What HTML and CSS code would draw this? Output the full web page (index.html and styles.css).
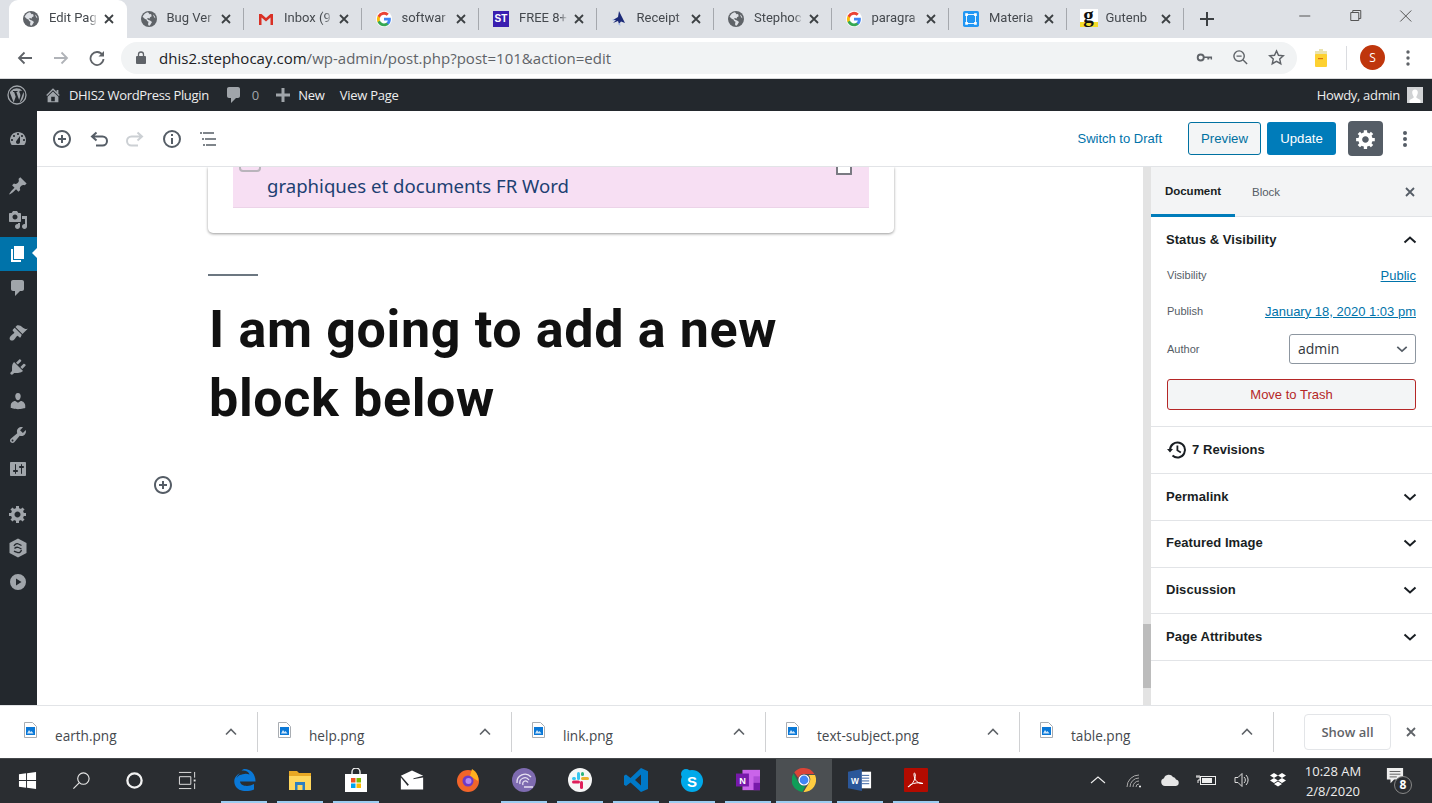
FILE: index.html
```html
<!DOCTYPE html>
<html lang="en">
<head>
<meta charset="utf-8">
<title>Edit Page</title>
<link rel="stylesheet" href="styles.css">
</head>
<body>
<svg class="defs" aria-hidden="true">
  <symbol id="globe" viewBox="0 0 16 16"><circle cx="8" cy="8" r="8" fill="#5f6368"/><path fill="#dee1e6" d="M7 1.200C4.500 1.600 2.500 3.400 1.600 5.700L4 8l1.500.5.600 1.600 1.400.6-.5 2.500 1 1.800 1.400-1.200 1.600-2.800-2-1.500-2-.7-1-1.300 1.200-.5 1.200.8.700-1.600 1.600-1-.6-2.200-1.500.3zM12 3.500l1 2.500 1.300 1.400c0-1.500-.8-3-2.300-3.900z"/></symbol>
  <symbol id="glogo" viewBox="-1 -1 20 20"><circle cx="9" cy="9" r="10" fill="#fff"/><path fill="#4285f4" d="M17.600 9.200c0-.6-.1-1.300-.2-1.800H9v3.500h4.800a4.100 4.100 0 0 1-1.800 2.700v2.200h2.900c1.700-1.600 2.700-3.900 2.700-6.600z"/><path fill="#34a853" d="M9 18c2.400 0 4.500-.8 5.900-2.200L12 13.600c-.8.500-1.800.9-3 .9-2.300 0-4.300-1.600-5-3.700H1v2.300A9 9 0 0 0 9 18z"/><path fill="#fbbc05" d="M4 10.700a5.400 5.400 0 0 1 0-3.400V5H1a9 9 0 0 0 0 8z"/><path fill="#ea4335" d="M9 3.600c1.300 0 2.500.5 3.400 1.300L15 2.400A9 9 0 0 0 1 5l3 2.300c.7-2.100 2.700-3.700 5-3.700z"/></symbol>
  <symbol id="close" viewBox="0 0 10 10"><path d="M1 1l8 8M9 1l-8 8" fill="none" stroke="currentColor" stroke-width="1.800"/></symbol>
  <symbol id="chev" viewBox="0 0 14 8"><path d="M1.500 1.500 7 6.500l5.500-5" fill="none" stroke="currentColor" stroke-width="2"/></symbol>
  <symbol id="chevup" viewBox="0 0 12 8"><path d="M1 6.500 6 1.500l5 5" fill="none" stroke="currentColor" stroke-width="1.600"/></symbol>
  <symbol id="file" viewBox="0 0 13 16"><path d="M.5.500h8l4 4v11H.500z" fill="#fff" stroke="#a9adb2"/><rect x="2" y="5" width="9" height="8" fill="#0a78d7"/><path d="M3 11.500l2-3.500 1.500 2 1-1 2 2.500z" fill="#cfe6fa"/></symbol>
  <symbol id="i-dash" viewBox="0 0 20 20"><path d="M3.760 16h12.480c1.100-1.370 1.760-3.110 1.760-5 0-4.420-3.580-8-8-8s-8 3.580-8 8c0 1.890.660 3.630 1.760 5zM10 4c.550 0 1 .450 1 1s-.450 1-1 1-1-.450-1-1 .450-1 1-1zM6 6c.550 0 1 .450 1 1s-.450 1-1 1-1-.450-1-1 .450-1 1-1zm8 0c.550 0 1 .450 1 1s-.450 1-1 1-1-.450-1-1 .450-1 1-1zm-5.370 5.550L12 7v6c0 1.100-.900 2-2 2s-2-.900-2-2c0-.570.240-1.080.630-1.450zM4 10c.550 0 1 .450 1 1s-.450 1-1 1-1-.450-1-1 .450-1 1-1zm12 0c.550 0 1 .450 1 1s-.450 1-1 1-1-.450-1-1 .450-1 1-1z"/></symbol>
  <symbol id="i-pin" viewBox="0 0 20 20"><path d="M10.440 3.020l1.820-1.820 6.360 6.350-1.830 1.820c-1.050-.680-2.480-.570-3.410.360l-.750.750c-.920.930-1.040 2.350-.350 3.410l-1.830 1.820-2.410-2.410-2.800 2.790c-.420.420-3.380 2.710-3.800 2.290s1.860-3.390 2.280-3.810l2.790-2.790L4.100 9.360l1.830-1.820c1.050.690 2.480.570 3.400-.360l.750-.750c.930-.920 1.050-2.350.360-3.410z"/></symbol>
  <symbol id="i-media" viewBox="0 0 20 20"><path d="M13 11V4c0-.550-.450-1-1-1h-1.670L9 1H5L3.670 3H2c-.550 0-1 .450-1 1v7c0 .550.450 1 1 1h10c.550 0 1-.450 1-1zM7 4.500c1.380 0 2.500 1.120 2.500 2.500S8.380 9.500 7 9.500 4.500 8.380 4.500 7 5.620 4.500 7 4.500zM14 6h5v10.500c0 1.380-1.120 2.500-2.500 2.500S14 17.880 14 16.500s1.120-2.500 2.500-2.500c.170 0 .340.020.500.050V9h-3V6zm-4 8.050V13h2v3.500c0 1.380-1.120 2.500-2.500 2.500S7 17.880 7 16.500 8.120 14 9.500 14c.170 0 .340.020.500.050z"/></symbol>
  <symbol id="i-page" viewBox="0 0 20 20"><path d="M6 15V2h10v13H6zm-1 1h8v2H3V5h2v11z"/></symbol>
  <symbol id="i-comment" viewBox="0 0 20 20"><path d="M5 2h9c1.100 0 2 .900 2 2v7c0 1.100-.900 2-2 2h-2l-5 5v-5H5c-1.100 0-2-.900-2-2V4c0-1.100.900-2 2-2z"/></symbol>
  <symbol id="i-brush" viewBox="0 0 20 20"><path d="M14.480 11.060L7.410 3.990l1.500-1.500c.500-.560 2.300-.470 3.510.320 1.210.800 1.430 1.280 2.910 2.100 1.180.640 2.450 1.260 4.450.850zM13.770 11.770 6.700 4.700 4.930 6.470a1 1 0 0 0 0 1.410l1.060 1.060a1 1 0 0 1 0 1.420c-.600.600-1.430 1.110-2.210 1.690-.350.260-.700.530-1.010.840-1.400 1.400-1.500 3-.500 4s2.600.900 4-.500c.310-.310.580-.660.840-1.010.580-.780 1.090-1.610 1.690-2.210a1 1 0 0 1 1.420 0l1.060 1.060a1 1 0 0 0 1.410 0z"/></symbol>
  <symbol id="i-plug" viewBox="0 0 20 20"><path d="M13.110 4.360L9.870 7.600 8 5.730l3.240-3.240c.350-.340 1.050-.200 1.560.320.520.510.660 1.210.310 1.550zm-8 1.770l.910-1.120 9.010 9.010-1.190.840c-.710.710-2.630 1.160-3.820 1.160H6.140L4.900 17.260c-.590.590-1.540.590-2.120 0-.590-.580-.590-1.530 0-2.120l1.240-1.240v-3.880c0-1.130.400-3.190 1.090-3.890zm7.260 3.970l3.240-3.240c.340-.350 1.040-.210 1.550.310.520.510.660 1.210.310 1.550l-3.240 3.250z"/></symbol>
  <symbol id="i-user" viewBox="0 0 20 20"><path d="M10 9.250c-2.270 0-2.730-3.440-2.730-3.440C7 4.020 7.820 2 9.970 2c2.160 0 2.980 2.020 2.710 3.810 0 0-.410 3.440-2.680 3.440zm0 2.570L12.720 10c2.390 0 4.520 2.330 4.520 4.530v2.490s-3.650 1.130-7.240 1.130c-3.650 0-7.240-1.130-7.240-1.130v-2.490c0-2.250 1.940-4.480 4.470-4.480z"/></symbol>
  <symbol id="i-tools" viewBox="0 0 20 20"><path d="M16.680 9.770c-1.340 1.340-3.300 1.670-4.950.990l-5.410 6.520c-.990.990-2.590.990-3.580 0s-.990-2.590 0-3.570l6.520-5.420c-.680-1.650-.350-3.610.990-4.950 1.280-1.280 3.120-1.620 4.720-1.060l-2.890 2.890 2.820 2.820 2.860-2.870c.530 1.580.180 3.390-1.080 4.650zM3.810 16.210c.400.390 1.040.390 1.430 0 .400-.400.400-1.040 0-1.430-.390-.400-1.030-.400-1.430 0-.390.390-.390 1.030 0 1.430z"/></symbol>
  <symbol id="i-sliders" viewBox="0 0 20 20"><path d="M18 16V4c0-.550-.450-1-1-1H3c-.550 0-1 .450-1 1v12c0 .550.450 1 1 1h14c.550 0 1-.450 1-1zM8 11h1c.550 0 1 .450 1 1s-.450 1-1 1H8v1.500c0 .280-.220.500-.500.500s-.500-.220-.500-.500V13H6c-.550 0-1-.450-1-1s.450-1 1-1h1V5.500c0-.280.220-.500.500-.500s.500.220.500.500V11zm5-2h-1c-.550 0-1-.450-1-1s.450-1 1-1h1V5.500c0-.280.220-.500.500-.500s.500.220.500.500V7h1c.550 0 1 .450 1 1s-.450 1-1 1h-1v5.500c0 .280-.220.500-.500.500s-.500-.220-.500-.500V9z"/></symbol>
  <symbol id="i-gear" viewBox="0 0 20 20"><path d="M18 12h-2.180c-.170.700-.440 1.350-.810 1.930l1.540 1.540-2.100 2.100-1.540-1.540c-.580.360-1.230.630-1.910.790V19H8v-2.180c-.680-.160-1.330-.430-1.910-.790l-1.540 1.540-2.120-2.120 1.540-1.540c-.360-.580-.630-1.230-.790-1.910H1V9.030h2.170c.160-.700.440-1.350.800-1.940L2.430 5.550l2.100-2.100 1.540 1.540c.580-.370 1.240-.640 1.930-.810V2h3v2.180c.680.160 1.330.430 1.910.790l1.540-1.540 2.120 2.120-1.540 1.540c.360.590.640 1.240.800 1.940H18V12zm-8.500 1.500c1.660 0 3-1.340 3-3s-1.340-3-3-3-3 1.340-3 3 1.340 3 3 3z"/></symbol>
  <symbol id="i-plus" viewBox="0 0 20 20"><path d="M10 1c-5 0-9 4-9 9s4 9 9 9 9-4 9-9-4-9-9-9zm0 16c-3.900 0-7-3.100-7-7s3.100-7 7-7 7 3.100 7 7-3.100 7-7 7zm1-11H9v3H6v2h3v3h2v-3h3V9h-3V6z"/></symbol>
</svg>

<header class="tabstrip">
  <div class="tab tab-active"><svg class="tab-ic"><use href="#globe"/></svg><span class="tab-t">Edit Pag</span><svg class="tab-x"><use href="#close"/></svg></div>
  <div class="tab"><svg class="tab-ic"><use href="#globe"/></svg><span class="tab-t">Bug Ver</span><svg class="tab-x"><use href="#close"/></svg></div>
  <div class="tab"><svg class="tab-ic" viewBox="0 0 16 16"><path d="M1 3h2.500L8 7l4.500-4H15v11h-2.500V6.500L8 10.500 3.500 6.500V14H1z" fill="#d93025"/></svg><span class="tab-t">Inbox (9</span><svg class="tab-x"><use href="#close"/></svg></div>
  <div class="tab"><svg class="tab-ic"><use href="#glogo"/></svg><span class="tab-t">softwar</span><svg class="tab-x"><use href="#close"/></svg></div>
  <div class="tab"><span class="tab-ic st">ST</span><span class="tab-t">FREE 8+</span><svg class="tab-x"><use href="#close"/></svg></div>
  <div class="tab"><svg class="tab-ic" viewBox="0 0 16 16"><path d="M8 0l3 6 3 6-4-1.500L8 13l-1-3-5 2 3-3H2l5-3z" fill="#1c2a78"/><path d="M1 9l2-1 .5 2zM7 13l2-1 .5 3z" fill="#9fb4e6"/></svg><span class="tab-t">Receipt</span><svg class="tab-x"><use href="#close"/></svg></div>
  <div class="tab"><svg class="tab-ic"><use href="#globe"/></svg><span class="tab-t">Stephoc</span><svg class="tab-x"><use href="#close"/></svg></div>
  <div class="tab"><svg class="tab-ic"><use href="#glogo"/></svg><span class="tab-t">paragra</span><svg class="tab-x"><use href="#close"/></svg></div>
  <div class="tab"><svg class="tab-ic" viewBox="0 0 18 18"><rect width="18" height="18" rx="2" fill="#2196f3"/><rect x="4" y="4" width="10" height="10" fill="none" stroke="#fff"/><path fill="#fff" d="M2.500 2.500h3v3h-3zM12.500 2.500h3v3h-3zM2.500 12.500h3v3h-3zM12.500 12.500h3v3h-3z"/></svg><span class="tab-t">Materia</span><svg class="tab-x"><use href="#close"/></svg></div>
  <div class="tab"><span class="tab-ic gut">g</span><span class="tab-t">Gutenb</span><svg class="tab-x"><use href="#close"/></svg></div>
  <svg class="newtab" viewBox="0 0 14 14"><path d="M7 0v14M0 7h14" stroke="#3c4043" stroke-width="2" fill="none"/></svg>
  <div class="winctl">
    <svg class="win-b" viewBox="0 0 50 12"><path d="M20 6h11" stroke="#555" fill="none"/></svg>
    <svg class="win-b" viewBox="0 0 50 12"><path d="M21.500 2.500h8v8h-8zM23.500 2.500V.5h8v8h-2" stroke="#555" fill="none"/></svg>
    <svg class="win-b" viewBox="0 0 50 12"><path d="M20 .5l11 11M31 .5l-11 11" stroke="#555" fill="none"/></svg>
  </div>
</header>

<nav class="navbar">
  <svg class="nav-b" viewBox="0 0 16 16"><path d="M15 8H2M7.500 2.500 2 8l5.500 5.500" fill="none" stroke="#5f6368" stroke-width="1.800"/></svg>
  <svg class="nav-b" viewBox="0 0 16 16"><path d="M1 8h13M8.500 2.500 14 8l-5.500 5.500" fill="none" stroke="#b0b3b8" stroke-width="1.800"/></svg>
  <svg class="nav-b" viewBox="0 0 16 16"><path d="M13.500 5A6.500 6.500 0 1 0 14.500 9" fill="none" stroke="#5f6368" stroke-width="1.800"/><path d="M15 1v5.500H9.500z" fill="#5f6368"/></svg>
  <div class="pill">
    <svg class="lock" viewBox="0 0 10 13"><path d="M2.500 5V3.500a2.500 2.500 0 0 1 5 0V5" fill="none" stroke="#5f6368" stroke-width="1.300"/><rect y="5" width="10" height="8" rx="1" fill="#5f6368"/></svg>
    <span class="url"><b class="url-h">dhis2.stephocay.com</b>/wp-admin/post.php?post=101&amp;action=edit</span>
    <svg class="pill-ic" viewBox="0 0 18 18"><circle cx="5" cy="9" r="3.200" fill="none" stroke="#5f6368" stroke-width="2"/><path d="M8 8h9v3h-1.500v-1.300H14V11h-2V9.500H8z" fill="#5f6368"/></svg>
    <svg class="pill-ic" viewBox="0 0 18 18"><circle cx="7.500" cy="7.500" r="5.500" fill="none" stroke="#5f6368" stroke-width="1.500"/><path d="M4.800 7.500h5.400M11.500 11.500 16 16" stroke="#5f6368" stroke-width="1.500" fill="none"/></svg>
    <svg class="pill-ic" viewBox="0 0 18 18"><path d="M9 2l2.100 4.700 5.100.5-3.800 3.400 1.100 5L9 13l-4.500 2.600 1.100-5-3.800-3.400 5.100-.5z" fill="none" stroke="#5f6368" stroke-width="1.500"/></svg>
  </div>
  <svg class="ext" viewBox="0 0 12 18"><path d="M4 0h4v2h4v4H0V2h4z" fill="#e9e3b0"/><rect y="5" width="12" height="13" rx="1" fill="#fdd131"/><rect x="3" y="9" width="5" height="1.200" fill="#d9730d"/></svg>
  <span class="navsep"></span>
  <span class="avatar">S</span>
  <svg class="kebab" viewBox="0 0 4 16"><circle cx="2" cy="2" r="1.700"/><circle cx="2" cy="8" r="1.700"/><circle cx="2" cy="14" r="1.700"/></svg>
</nav>

<div class="adminbar">
  <svg class="ab-wp" viewBox="0 0 20 20"><circle cx="10" cy="10" r="9" fill="none" stroke="#a0a5aa" stroke-width="1.300"/><path d="M2.800 7.600 6.700 17.500l2-5.700L7.100 7H6V6h4.500v1H9.300l2.800 8 1-3c.5-1.700.2-3.200-.6-4.500-.4-.8.100-1.800 1-1.700h1.800A7.800 7.800 0 0 0 3.800 6zM16.500 7c.8 2.500.4 5-1.400 8.200L12.600 17.800 15 11z" fill="#a0a5aa"/></svg>
  <svg class="ab-home" viewBox="0 0 20 20"><path fill="#a0a5aa" d="M16 8.500l1.530 1.530-1.060 1.060L10 4.620l-6.470 6.470-1.060-1.060L10 2.500l4 4v-2h2v4zm-6-2.460l6 5.990V18H4v-5.970zM12 17v-5H8v5h4z"/></svg>
  <span class="ab-t ab-site">DHIS2 WordPress Plugin</span>
  <svg class="ab-cmt"><use href="#i-comment"/></svg>
  <span class="ab-t ab-count">0</span>
  <svg class="ab-plus" viewBox="0 0 14 14"><path d="M5.500 0h3v5.500H14v3H8.500V14h-3V8.500H0v-3h5.500z" fill="#a0a5aa"/></svg>
  <span class="ab-t ab-new">New</span>
  <span class="ab-t ab-view">View Page</span>
  <span class="ab-t ab-howdy">Howdy, admin</span>
  <svg class="ab-ava" viewBox="0 0 16 16"><rect width="16" height="16" fill="#d0d2d4"/><path d="M8 2.500c2 0 3 1.500 2.800 3.300-.1 1.300-.8 3-1.400 3.700v1.300l4 2.200V16H2.600v-3l4-2.200V9.500c-.6-.7-1.300-2.400-1.400-3.700C5 4 6 2.500 8 2.500z" fill="#fff"/></svg>
</div>

<div class="wp">
  <aside class="menu">
    <div class="mi mi-first"><svg><use href="#i-dash"/></svg></div>
    <div class="mi mi-gap1"><svg><use href="#i-pin"/></svg></div>
    <div class="mi"><svg><use href="#i-media"/></svg></div>
    <div class="mi mi-on"><svg><use href="#i-page"/></svg></div>
    <div class="mi"><svg><use href="#i-comment"/></svg></div>
    <div class="mi mi-gap"><svg><use href="#i-brush"/></svg></div>
    <div class="mi"><svg><use href="#i-plug"/></svg></div>
    <div class="mi"><svg><use href="#i-user"/></svg></div>
    <div class="mi"><svg><use href="#i-tools"/></svg></div>
    <div class="mi"><svg><use href="#i-sliders"/></svg></div>
    <div class="mi mi-gap"><svg><use href="#i-gear"/></svg></div>
    <div class="mi"><svg viewBox="0 0 20 20"><path d="M10 .5 18.500 5v10L10 19.500 1.500 15V5z"/><path d="M6 8c1-2 3-3 4.500-2l3 1.500M6.500 10.500c1-1 2.500-1.500 4-1l3 1.500M6 13c1 .8 2 1 3.500 1.500 2 .5 3.500-1 4-2.500" fill="none" stroke="#23282d" stroke-width="1.300"/></svg></div>
    <div class="mi"><svg viewBox="0 0 20 20"><path d="M10 2a8 8 0 1 0 0 16 8 8 0 0 0 0-16zM8 6.500l5.500 3.500L8 13.500z" fill-rule="evenodd"/></svg></div>
  </aside>

  <div class="editor">
    <div class="edit-top">
      <svg class="et-ic et-plus"><use href="#i-plus"/></svg>
      <svg class="et-ic" viewBox="0 0 20 20"><path d="M7.500 3.500 3 7.500l4.500 4M4 7.500h9.500a4.500 4.500 0 0 1 0 9H7" fill="none" stroke="#555d66" stroke-width="2"/></svg>
      <svg class="et-ic" viewBox="0 0 20 20"><path d="M12.500 3.500 17 7.500l-4.500 4M16 7.500H6.500a4.500 4.500 0 0 0 0 9H13" fill="none" stroke="#ccd0d4" stroke-width="2"/></svg>
      <svg class="et-ic" viewBox="0 0 20 20"><circle cx="10" cy="10" r="8" fill="none" stroke="#555d66" stroke-width="2"/><path d="M9 9h2v6H9zM9 5h2v2H9z" fill="#555d66"/></svg>
      <svg class="et-ic" viewBox="0 0 20 20"><path d="M2 4h2M5 4h11M4 10h2M7 10h11M5 16h2M8 16h10" fill="none" stroke="#555d66" stroke-width="1.600"/></svg>
      <a class="draft">Switch to Draft</a>
      <span class="btn btn-prev">Preview</span>
      <span class="btn btn-upd">Update</span>
      <span class="btn-gear"><svg viewBox="0 0 20 20"><use href="#i-gear"/></svg></span>
      <svg class="et-dots" viewBox="0 0 4 16"><circle cx="2" cy="2" r="2"/><circle cx="2" cy="8" r="2"/><circle cx="2" cy="14" r="2"/></svg>
    </div>
    <div class="edit-body">
      <main class="canvas">
        <section class="card">
          <div class="card-pink">
            <div class="pink-icons">
              <svg class="pk-link" viewBox="0 0 22 12"><rect x="1" y="1" width="20" height="10" rx="3" fill="none" stroke="#b9b4bb" stroke-width="2"/><path d="M7 6h8" stroke="#b9b4bb" stroke-width="2"/></svg>
              <span class="pk-check"></span>
            </div>
            <p class="pink-t">graphiques et documents FR Word</p>
          </div>
        </section>
        <hr class="sep">
        <h1 class="head">I am going to add a new block below</h1>
        <svg class="inserter"><use href="#i-plus"/></svg>
      </main>
      <div class="scrollbar"><span class="thumb"></span></div>
      <aside class="side">
        <div class="side-tabs">
          <span class="st-a">Document</span>
          <span class="st-b">Block</span>
          <svg class="st-x"><use href="#close"/></svg>
        </div>
        <section class="panel panel-open">
          <div class="p-head"><h2>Status &amp; Visibility</h2><svg class="p-chev p-up"><use href="#chev"/></svg></div>
          <div class="row row-v"><span class="lab">Visibility</span><a class="lnk">Public</a></div>
          <div class="row row-p"><span class="lab">Publish</span><a class="lnk">January 18, 2020 1:03 pm</a></div>
          <div class="row row-a"><span class="lab">Author</span><span class="sel">admin<svg><use href="#chev"/></svg></span></div>
          <div class="trash">Move to Trash</div>
        </section>
        <section class="panel p-rev">
          <svg viewBox="0 0 20 20"><path d="M3 10a7.500 7.500 0 1 1 2.500 5.600" fill="none" stroke="#191e23" stroke-width="2"/><path d="M0 9h6l-3 3.500zM9.500 5.500h1.800v4.500l3 1.800-.9 1.400-3.900-2.400z" fill="#191e23"/></svg>
          <h2>7 Revisions</h2>
        </section>
        <section class="panel"><div class="p-head"><h2>Permalink</h2><svg class="p-chev"><use href="#chev"/></svg></div></section>
        <section class="panel p-raise"><div class="p-head"><h2>Featured Image</h2><svg class="p-chev"><use href="#chev"/></svg></div></section>
        <section class="panel p-short"><div class="p-head"><h2>Discussion</h2><svg class="p-chev"><use href="#chev"/></svg></div></section>
        <section class="panel"><div class="p-head"><h2>Page Attributes</h2><svg class="p-chev"><use href="#chev"/></svg></div></section>
      </aside>
    </div>
  </div>
</div>

<div class="downloads">
  <div class="dl"><svg class="dl-f"><use href="#file"/></svg><span class="dl-n">earth.png</span><svg class="dl-c"><use href="#chevup"/></svg></div>
  <div class="dl"><svg class="dl-f"><use href="#file"/></svg><span class="dl-n">help.png</span><svg class="dl-c"><use href="#chevup"/></svg></div>
  <div class="dl"><svg class="dl-f"><use href="#file"/></svg><span class="dl-n">link.png</span><svg class="dl-c"><use href="#chevup"/></svg></div>
  <div class="dl"><svg class="dl-f"><use href="#file"/></svg><span class="dl-n">text-subject.png</span><svg class="dl-c"><use href="#chevup"/></svg></div>
  <div class="dl"><svg class="dl-f"><use href="#file"/></svg><span class="dl-n">table.png</span><svg class="dl-c"><use href="#chevup"/></svg></div>
  <span class="showall">Show all</span>
  <svg class="dl-x"><use href="#close"/></svg>
</div>

<footer class="taskbar">
  <div class="tb-app"><svg viewBox="0 0 20 20"><path fill="#fff" d="M1 3.500 8.500 2.400V9.500H1zM9.500 2.300 19 1v8.500H9.500zM1 10.500h7.500v7.100L1 16.500zM9.500 10.500H19V19l-9.500-1.300z"/></svg></div>
  <div class="tb-app"><svg viewBox="0 0 20 20"><circle cx="12" cy="8" r="6" fill="none" stroke="#e6e6e6" stroke-width="1.200"/><path d="M7.500 12.500 1.500 18.500" stroke="#e6e6e6" stroke-width="1.200"/></svg></div>
  <div class="tb-app"><svg viewBox="0 0 20 20"><circle cx="10" cy="10" r="7.500" fill="none" stroke="#f2f2f2" stroke-width="2.400"/></svg></div>
  <div class="tb-app"><svg viewBox="0 0 20 20"><path d="M1 1.500h13M1 18.500h13M1.500 6h12v8h-12zM17.500 1v6M17.500 13v6" fill="none" stroke="#e6e6e6"/><rect x="16.500" y="9" width="2" height="2" fill="#e6e6e6"/></svg></div>
  <div class="tb-app tb-run"><svg viewBox="0 0 24 24"><path fill="#0a78d7" d="M12.500 1C19 1 23.500 6 23.500 13.500H8c.3 4.500 8 6 14 2.500v5.500c-7 3-16.500 2-19-4.500C.8 11.500 4 7 8 5.200 6 7 5 8.500 4.500 10c3-5 9-4 10-1.500h-6c1-3 6-3.500 9-2-1-3-4-4.500-8-4C11 1.500 11.500 1 12.500 1z"/></svg></div>
  <div class="tb-app tb-run"><svg viewBox="0 0 24 24"><path fill="#e8a824" d="M1 3h8l2 2h12v17H1z"/><path fill="#ffd75e" d="M1 8h22v14H1z"/><path fill="#2d7fc1" d="M7 14h10v8h-2.500v-5h-5v5H7z"/></svg></div>
  <div class="tb-app tb-run"><svg viewBox="0 0 24 24"><path d="M8 7V4a4 4 0 0 1 8 0v3" fill="none" stroke="#eee" stroke-width="1.400"/><rect x="1" y="6" width="22" height="18" fill="#fff"/><rect x="7" y="10" width="4.500" height="4.500" fill="#f25022"/><rect x="12.500" y="10" width="4.500" height="4.500" fill="#7fba00"/><rect x="7" y="15.500" width="4.500" height="4.500" fill="#00a4ef"/><rect x="12.500" y="15.500" width="4.500" height="4.500" fill="#ffb900"/></svg></div>
  <div class="tb-app"><svg viewBox="0 0 28 24"><path fill="#fff" d="M14 1 27 7 16 10 11 18 3 9 1 7zM1 9l8 10 6-8 12-2v14H1z"/></svg></div>
  <div class="tb-app"><svg viewBox="0 0 24 24"><circle cx="12" cy="13" r="11" fill="#f2652a"/><path d="M16 1c5 3 7 8 6 12L14 8z" fill="#ffb01f"/><circle cx="12" cy="13" r="5.500" fill="#6e3bc7"/><circle cx="12.500" cy="13" r="3" fill="#b48af0"/></svg></div>
  <div class="tb-app tb-run"><svg viewBox="0 0 24 24"><circle cx="12" cy="12" r="12" fill="#7e6bb0"/><path d="M5 15a8 8 0 0 1 14-6M8 16a5 5 0 0 1 9-4M11 17a2.500 2.500 0 0 1 5-2.500M12 19h9" fill="none" stroke="#e7e1f2" stroke-width="1.300"/></svg></div>
  <div class="tb-app tb-run"><svg viewBox="0 0 24 24"><circle cx="12" cy="12" r="12" fill="#f6f6f6"/><rect x="9" y="4" width="3" height="8" rx="1.500" fill="#36c5f0"/><rect x="12" y="13" width="3" height="8" rx="1.500" fill="#e01e5a"/><rect x="4" y="12.500" width="8" height="3" rx="1.500" fill="#e01e5a"/><rect x="13" y="9" width="8" height="3" rx="1.500" fill="#ecb22e"/><rect x="13" y="4" width="3" height="4" rx="1.500" fill="#2eb67d"/><rect x="4" y="9" width="4" height="3" rx="1.500" fill="#36c5f0"/></svg></div>
  <div class="tb-app tb-run"><svg viewBox="0 0 24 24"><path fill="#0079c8" d="M17 0 24 3.200V21l-7 3L6.500 14.500 2 18 0 16.800v-9L2 6.500l4.500 3.500zM17 6.500 11 12l6 5.500z"/></svg></div>
  <div class="tb-app tb-run"><svg viewBox="0 0 24 24"><circle cx="12" cy="13" r="11" fill="#00a9ea"/><circle cx="6" cy="6" r="5" fill="#00a9ea"/><text x="12" y="19" class="sky">S</text></svg></div>
  <div class="tb-app tb-run"><svg viewBox="0 0 26 24"><rect x="7" y="1" width="19" height="22" fill="#ca64ea"/><rect x="19" y="8" width="7" height="7" fill="#ae4bd5"/><rect x="19" y="15" width="7" height="8" fill="#7719aa"/><rect y="5" width="14" height="14" fill="#7719aa"/><text x="7" y="16" class="one">N</text></svg></div>
  <div class="tb-app tb-run tb-chrome"><svg viewBox="0 0 24 24"><path fill="#db4437" d="M12 0a12 12 0 0 1 10.400 6H12a6 6 0 0 0-5.700 4L2.300 4.200A12 12 0 0 1 12 0z"/><path fill="#0f9d58" d="M1.600 5.500 6.800 15a6 6 0 0 0 6.700 2.800L10.400 24A12 12 0 0 1 1.600 5.500z"/><path fill="#ffcd40" d="M23 7A12 12 0 0 1 11.500 24l5.500-9a6 6 0 0 0-.5-8z"/><circle cx="12" cy="12" r="5" fill="#4285f4" stroke="#fff" stroke-width="1.200"/></svg></div>
  <div class="tb-app tb-run"><svg viewBox="0 0 26 24"><rect x="8" y="3" width="17" height="18" fill="#fff"/><path d="M15 7h8M15 10h8M15 13h8M15 16h8" stroke="#2b579a"/><path fill="#2b579a" d="M0 3 15 0v24L0 21z"/><text x="7.500" y="16" class="wrd">W</text></svg></div>
  <div class="tb-app tb-run"><svg viewBox="0 0 24 24"><rect width="24" height="24" rx="1" fill="#b30b00"/><path d="M4 19c3-1 6-5 7-9 .500-2 .500-5-.500-5-1 0-.500 4 1 7 1.500 2.500 5 4 7.500 3.500-2-1-6-1-9.500 0S4.500 18 4 19z" fill="none" stroke="#fff"/></svg></div>
  <div class="tray">
    <svg class="tr-ic" viewBox="0 0 16 16"><path d="M1 11 8 5l7 6" fill="none" stroke="#eee" stroke-width="1.100"/></svg>
    <svg class="tr-ic" viewBox="0 0 16 16"><path d="M1 15a12 12 0 0 1 12-12M4 15a9 9 0 0 1 9-9M7 15a6 6 0 0 1 6-6M10 15a3 3 0 0 1 3-3" fill="none" stroke="#aaa"/><circle cx="14" cy="14.500" r="1" fill="#fff"/></svg>
    <svg class="tr-ic tr-w" viewBox="0 0 20 16"><path fill="#e6e6e6" d="M5 14a4 4 0 0 1-1-7.800A5 5 0 0 1 13 5a4 4 0 0 1 3 2.500A3.300 3.300 0 0 1 16 14z"/></svg>
    <svg class="tr-ic tr-w" viewBox="0 0 20 16"><rect x="4.500" y="4.500" width="15" height="8" fill="none" stroke="#eee"/><rect x="6" y="6" width="10" height="5" fill="#eee"/><path d="M0 5h4v3H2v3M1 3v2M3 3v2" fill="none" stroke="#eee"/></svg>
    <svg class="tr-ic" viewBox="0 0 16 16"><path d="M1 5.500h3l4-4v13l-4-4H1zM10 5a4 4 0 0 1 0 6M12 3a7 7 0 0 1 0 10" fill="none" stroke="#ddd"/></svg>
    <svg class="tr-ic" viewBox="0 0 16 16"><path fill="#fff" d="M4 1l4 2.500L4 6 0 3.500zM12 1l4 2.500L12 6 8 3.500zM4 6l4 2.500L4 11 0 8.500zM12 6l4 2.500L12 11 8 8.500zM4 12l4-2.500 4 2.500-4 2.500z"/></svg>
    <div class="clock"><span>10:28 AM</span><span>2/8/2020</span></div>
    <div class="notif">
      <svg viewBox="0 0 20 20"><path d="M1 1h18v13H9l-4 4v-4H1z" fill="#eee"/><path d="M4 5h12M4 8h12M4 11h8" stroke="#555"/></svg>
      <span class="notif-n">8</span>
    </div>
  </div>
</footer>
</body>
</html>
```

FILE: styles.css
```css
* { box-sizing: border-box; }
html, body { margin: 0; padding: 0; }
body {
  width: 1432px;
  height: 803px;
  overflow: hidden;
  display: flex;
  flex-direction: column;
  font-family: "Liberation Sans", Arial, sans-serif;
  background: #fff;
}
.defs { display: none; }
h1, h2, p { margin: 0; }

/* Browser tab strip */
.tabstrip {
  height: 38px;
  flex: none;
  display: flex;
  align-items: center;
  background: #dee1e6;
  padding-left: 9px;
}
.tab {
  width: 117.500px;
  height: 38px;
  flex: none;
  display: flex;
  align-items: center;
  padding: 0 13px 0 14px;
  position: relative;
}
.tab::after {
  content: "";
  position: absolute;
  right: 0;
  top: 8px;
  width: 1px;
  height: 22px;
  background: #a5a8ad;
}
.tab-active { background: #fff; border-radius: 9px 9px 0 0; }
.tab-active::after { content: none; }
.tab-ic { width: 16px; height: 16px; flex: none; }
.tab-t {
  flex: 1;
  min-width: 0;
  margin: -2px 6px 0 10px;
  font: 13px/16px Roboto, sans-serif;
  color: #45494e;
  white-space: nowrap;
  overflow: hidden;
  -webkit-mask-image: linear-gradient(90deg, #000 82%, transparent);
  mask-image: linear-gradient(90deg, #000 82%, transparent);
}
.tab-x { width: 10px; height: 10px; flex: none; color: #3c4043; margin-top: -1px; }
.st { background: #3a1fb0; color: #fff; font: bold 10px/16px "Liberation Sans", sans-serif; text-align: center; }
.gut {
  width: 18px;
  height: 18px;
  margin: -2px -2px 0 -1px;
  background: linear-gradient(#fff 72%, #f5dc2a 72%);
  color: #111;
  font: bold 21px/13px "Liberation Serif", serif;
  text-align: center;
}
.newtab { width: 14px; height: 14px; margin-left: 16px; flex: none; }
.winctl { margin-left: auto; display: flex; padding-right: 2px; margin-top: -6px; }
.win-b { width: 50.500px; height: 12px; display: block; }

/* Address bar */
.navbar {
  height: 41px;
  flex: none;
  display: flex;
  align-items: center;
  padding: 0 0 1px 7px;
  background: #fff;
  border-bottom: 1px solid #d8d9db;
}
.nav-b { width: 16px; height: 16px; margin: 0 10px; flex: none; }
.pill {
  width: 1176px;
  margin-left: 6px;
  height: 32px;
  flex: none;
  display: flex;
  align-items: center;
  background: #f1f3f4;
  border-radius: 16px;
  padding: 0 12px 0 15px;
}
.lock { width: 10px; height: 13px; flex: none; }
.url { margin-left: 13px; flex: 1; font: 15px/20px "Open Sans", sans-serif; letter-spacing: .02px; color: #5f6368; white-space: nowrap; }
.url-h { font-weight: 400; color: #202124; }
.pill-ic { width: 17px; height: 17px; margin-left: 19px; flex: none; }
.ext { width: 12px; height: 18px; margin-left: 18px; flex: none; }
.navsep { width: 1px; height: 24px; background: #dadce0; margin-left: 19px; flex: none; }
.avatar {
  width: 25px; height: 25px; border-radius: 50%;
  background: #bf360c; color: #fff;
  margin-left: 13px; flex: none;
  font: 12px/25px "Open Sans", sans-serif; text-align: center;
}
.kebab { width: 4px; height: 16px; margin-left: 21px; fill: #5f6368; flex: none; }

/* WP admin bar */
.adminbar {
  height: 32px;
  flex: none;
  display: flex;
  align-items: center;
  background: #23282d;
  padding: 0 9px 0 7px;
}
.ab-wp { width: 20px; height: 20px; flex: none; }
.ab-home { width: 18px; height: 18px; flex: none; margin-left: 17px; }
.ab-t { font: 13px/20px "Open Sans", sans-serif; color: #eee; white-space: nowrap; }
.ab-site { margin-left: 7px; letter-spacing: -.34px; }
.ab-cmt { width: 20px; height: 20px; fill: #a0a5aa; margin-left: 15px; flex: none; }
.ab-count { margin-left: 8px; color: #a0a5aa; }
.ab-plus { width: 14px; height: 14px; margin-left: 17px; flex: none; }
.ab-new { margin-left: 8px; letter-spacing: -.25px; }
.ab-view { margin-left: 15px; letter-spacing: -.25px; }
.ab-howdy { margin-left: auto; letter-spacing: -.32px; }
.ab-ava { width: 16px; height: 16px; margin-left: 7px; flex: none; }

/* Main layout */
.wp { flex: 1; min-height: 0; display: flex; }
.menu { width: 37px; flex: none; background: #23282d; }
.mi { height: 34px; display: flex; align-items: center; justify-content: center; padding-right: 2px; position: relative; }
.mi svg { width: 20px; height: 20px; fill: #a0a5aa; display: block; }
.mi-first { margin-top: 11px; }
.mi-gap1 { margin-top: 13px; }
.mi-gap { margin-top: 11px; }
.mi-on { background: #0073aa; }
.mi-on svg { fill: #fff; }
.mi-on::after {
  content: "";
  position: absolute;
  right: 0;
  top: 11px;
  border: 5px solid transparent;
  border-left: 0;
  border-right-color: #fff;
}

.editor { flex: 1; min-width: 0; display: flex; flex-direction: column; }
.edit-top {
  height: 56px;
  flex: none;
  display: flex;
  align-items: center;
  padding: 0 0 0 15px;
  background: #fff;
  border-bottom: 1px solid #e2e4e7;
}
.et-ic { width: 20px; height: 20px; margin-right: 16.500px; flex: none; }
.et-plus { fill: #555d66; }
.draft { margin-left: auto; font-size: 13px; color: #0073aa; margin-right: 26px; margin-top: -1px; }
.btn {
  height: 33px;
  display: flex;
  align-items: center;
  justify-content: center;
  font-size: 13.200px;
  border-radius: 3px;
  flex: none;
}
.btn-prev { width: 73px; background: #f3f5f6; color: #0071a1; border: 1px solid #0071a1; }
.btn-upd { width: 69px; margin-left: 6px; background: #007cba; color: #fff; }
.btn-gear {
  width: 35px; height: 35px; margin-left: 12px; flex: none;
  background: #555d66; border-radius: 4px;
  display: flex; align-items: center; justify-content: center;
}
.btn-gear svg { width: 22px; height: 22px; fill: #fff; }
.et-dots { width: 4px; height: 16px; margin: 0 25px 0 20px; flex: none; fill: #555d66; }

.edit-body { flex: 1; min-height: 0; display: flex; }
.canvas { flex: 1; min-width: 0; overflow: hidden; padding-left: 171px; }
.card {
  width: 686px;
  height: 66px;
  padding: 0 25px;
  background: #fff;
  border-radius: 0 0 5px 5px;
  box-shadow: 0 1px 3px rgba(0,0,0,.4);
  clip-path: inset(0 -5px -5px -5px);
}
.card-pink {
  height: 41px;
  background: #f7dff3;
  border-bottom: 1px solid #ecd3e8;
  overflow: hidden;
}
.pink-icons { height: 8px; display: flex; justify-content: space-between; padding: 0 17px 0 6px; align-items: flex-end; }
.pk-link { width: 22px; height: 12px; flex: none; margin-bottom: 3px; }
.pk-check { width: 16px; height: 16px; border: 2px solid #7a7a82; border-top: 0; border-radius: 1px; background: #fff; flex: none; }
.pink-t { margin: -3px 0 0 34px; font: 18.600px/27px "Noto Sans", sans-serif; color: #1d3f72; }
.sep { width: 50px; height: 2px; margin: 41px 0 0; border: 0; background: #6c7781; }
.head {
  width: 640px;
  margin: 19px 0 0 1px;
  font: 700 52px/69px Roboto, sans-serif;
  letter-spacing: .65px;
  color: #111;
}
.inserter { width: 20px; height: 20px; margin: 42px 0 0 -55px; display: block; fill: #555d66; }

.scrollbar { width: 8px; flex: none; background: #e3e3e3; display: flex; flex-direction: column; justify-content: flex-end; padding-bottom: 17px; }
.thumb { height: 64px; background: #bcbcbc; display: block; }

.side { width: 281px; flex: none; background: #fff; }
.side-tabs {
  height: 50px;
  display: flex;
  align-items: center;
  background: #f3f4f5;
  border-bottom: 1px solid #e2e4e7;
  font-size: 11.500px;
  position: relative;
}
.st-a {
  width: 84px; height: 50px; flex: none;
  display: flex; align-items: center; justify-content: center;
  font-weight: 700; color: #191e23;
  border-bottom: 3px solid #007cba;
  padding-top: 2px;
}
.st-b { margin-left: 17px; color: #555d66; }
.st-x { width: 10px; height: 10px; margin-left: auto; margin-right: 17px; color: #555d66; }
.panel { border-bottom: 1px solid #e2e4e7; padding: 0 16px 0 15px; }
.panel h2 { font-size: 13px; line-height: 20px; font-weight: 700; color: #191e23; letter-spacing: .05px; }
.p-head { height: 46px; display: flex; align-items: center; justify-content: space-between; }
.p-raise .p-head { padding-bottom: 2px; }
.p-short .p-head { height: 45px; padding-bottom: 1px; }
.p-chev { width: 14px; height: 8px; color: #191e23; flex: none; margin-right: -1px; }
.p-up { transform: rotate(180deg); }
.panel-open { height: 210px; }
.row { display: flex; align-items: center; justify-content: space-between; padding-left: 1px; }
.row-v { height: 24px; }
.row-p { margin-top: 12px; height: 24px; }
.row-a { margin-top: 11px; height: 30px; }
.lab { font-size: 11px; color: #555d66; }
.lnk { font-size: 13px; color: #0073aa; text-decoration: underline; }
.sel {
  width: 127px; height: 30px;
  border: 1px solid #8d96a0; border-radius: 3px;
  padding-left: 8px;
  display: flex; align-items: center; justify-content: space-between;
  font: 14px/20px "Open Sans", sans-serif; color: #32373c;
}
.sel svg { width: 12px; height: 8px; color: #555d66; margin-right: 7px; }
.trash {
  margin-top: 15px;
  height: 31px;
  margin-left: 1px;
  border: 1px solid #b52727;
  border-radius: 3px;
  background: #f3f5f6;
  color: #b52727;
  font-size: 13px;
  text-align: center;
  line-height: 29px;
}
.p-rev { height: 47px; display: flex; align-items: center; padding-left: 16px; }
.p-rev svg { width: 20px; height: 20px; flex: none; margin-right: 5px; }

/* Downloads shelf */
.downloads {
  height: 53px;
  flex: none;
  display: flex;
  align-items: center;
  background: #fff;
  border-top: 1px solid #e2e4e7;
  padding-left: 4px;
}
.dl { width: 254px; height: 40px; flex: none; display: flex; align-items: center; padding-left: 20px; border-right: 1px solid #d0d1d3; position: relative; }
.dl-f { width: 13px; height: 16px; flex: none; margin-top: -4px; }
.dl-n { margin: 7px 0 0 18px; font: 13.600px/20px "Open Sans", sans-serif; color: #45494e; }
.dl-c { width: 12px; height: 8px; color: #5f6368; position: absolute; left: 221px; top: 16px; }
.showall {
  width: 87px; height: 36px; margin-left: 30px; flex: none;
  border: 1px solid #e3e5e8; border-radius: 4px;
  font: 600 13px/34px "Open Sans", sans-serif; text-align: center; color: #5f6368;
}
.dl-x { width: 10px; height: 10px; margin-left: 15px; color: #5f6368; flex: none; }

/* Windows taskbar */
.taskbar {
  height: 45px;
  flex: none;
  display: flex;
  align-items: stretch;
  background: #2a2d31;
  border-top: 1px solid #44474a;
  padding-left: 1px;
}
.tb-app {
  width: 56px;
  flex: none;
  display: flex;
  align-items: center;
  justify-content: center;
  position: relative;
}
.tb-app:first-child { width: 53px; }
.tb-app:nth-child(2) { width: 54px; }
.tb-app:nth-child(3) { width: 53px; }
.tb-app:nth-child(4) { width: 53px; margin-right: 2px; }
.tb-app svg { width: 24px; height: 24px; display: block; margin-top: -2px; }
.tb-app:nth-child(-n+4) svg { width: 19px; height: 19px; }
.tb-run::after {
  content: "";
  position: absolute;
  left: 5px; right: 5px; bottom: 0;
  height: 2px;
  background: #9ccdf1;
}
.tb-chrome { background: #4b4f52; }
.tb-chrome::after { left: 0; right: 0; }
.sky { font: 700 15px "Liberation Sans", sans-serif; fill: #fff; text-anchor: middle; }
.one { font: 700 10px "Liberation Sans", sans-serif; fill: #fff; text-anchor: middle; }
.wrd { font: 700 9px "Liberation Sans", sans-serif; fill: #fff; text-anchor: middle; }
.tray { margin-left: auto; display: flex; align-items: center; color: #eee; padding-right: 28px; }
.tr-ic { width: 16px; height: 16px; margin: -2px 10px 0; flex: none; }
.tr-w { width: 20px; margin: -2px 8px 0; }
.clock { width: 70px; display: flex; flex-direction: column; align-items: center; font: 13px/20px "Open Sans", sans-serif; margin-left: 2px; }
.notif { position: relative; width: 18px; height: 24px; margin-left: 18px; }
.notif svg { width: 18px; height: 18px; display: block; margin-top: -2px; }
.notif-n {
  position: absolute;
  left: 8px; top: 7px;
  width: 18px; height: 18px;
  border-radius: 50%;
  border: 1px solid #888;
  background: #2a2d31;
  font: 700 12px/16px "Open Sans", sans-serif;
  text-align: center;
  color: #fff;
}
```
